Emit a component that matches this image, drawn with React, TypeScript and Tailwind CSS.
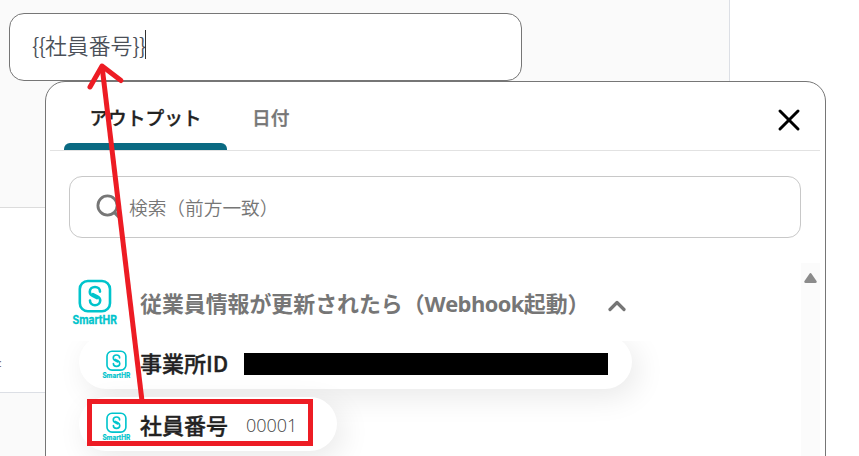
import { X } from 'lucide-react';

type Output = {
  label: string;
  value: string;
  masked?: boolean;
};

const outputs: Output[] = [
  { label: '事業所ID', value: '', masked: true },
  { label: '社員番号', value: '00001' },
];

function SmartHRLogo({ className }: { className: string }) {
  return (
    <svg viewBox="0 0 46 48" className={`overflow-visible ${className}`} fill="none" stroke="#00c4cc" strokeLinecap="round">
      <rect x="7.8" y="2" width="30.2" height="30.2" rx="8" strokeWidth="2.6" />
      <path
        d="M28 12.6C28 9.9 25.9 8 23 8s-5.2 2-5.2 4.7c0 2 1 3.3 2.800 4.200l4.400 2.200M18 21.500C18 24.300 20.100 26.200 23 26.200s5.200-2 5.200-4.700c0-2-1-3.300-2.800-4.200l-4.400-2.200"
        strokeWidth="2.6"
        strokeLinejoin="round"
      />
      <text
        x="22.7"
        y="45.4"
        textAnchor="middle"
        textLength="44.5"
        lengthAdjust="spacingAndGlyphs"
        fill="#00c4cc"
        stroke="#00c4cc"
        strokeWidth="0.3"
        fontFamily="Inter, sans-serif"
        fontWeight="700"
        fontSize="11.5"
      >
        SmartHR
      </text>
    </svg>
  );
}

function OutputPill({ label, value, masked }: Output) {
  return (
    <div className="flex h-[54px] w-fit items-center rounded-full bg-white pl-[23px] pr-[24px] shadow-[6px_8px_30px_rgba(0,0,0,0.09)]">
      <SmartHRLogo className="mt-[6px] h-[30px] w-[29px] shrink-0" />
      <span className="ml-[9px] whitespace-nowrap text-[22px] font-medium leading-none text-[#222] [-webkit-text-stroke:0.35px_#222]">
        {label}
      </span>
      {masked ? (
        <span className="ml-4 mt-[3px] h-[22px] w-[364px] bg-black" />
      ) : (
        <span className="ml-[18px] mr-[16px] mt-[2px] font-['Open_Sans'] text-[18px] font-light leading-none text-[#444]">
          {value}
        </span>
      )}
    </div>
  );
}

function OutputPicker() {
  return (
    <div className="absolute left-[45px] top-[81px] h-[400px] w-[781px] rounded-[20px] border border-[#767676] bg-white pl-1 pr-[5px]">
      {/* タブ */}
      <div className="flex h-[69px] items-stretch border-b border-[#e2e2e2] pl-[14px]">
        <div className="flex w-[163px] flex-col items-center justify-between">
          <span className="pt-[24px] text-[18.7px] font-medium leading-[22px] text-[#222] [-webkit-text-stroke:0.35px_#222]">
            アウトプット
          </span>
          <span className="h-[7px] w-full rounded-t-[6px] bg-[#0a6a82]" />
        </div>
        <span className="ml-[25px] pt-[24px] text-[18.7px] font-medium leading-[22px] text-[#767676] [-webkit-text-stroke:0.35px_#767676]">
          日付
        </span>
        <button type="button" className="ml-auto mr-[13px] mt-[20px] h-9 w-9">
          <X className="h-9 w-9 text-black" strokeWidth={2} />
        </button>
      </div>

      {/* 検索 */}
      <div className="ml-[19px] mt-[25px] flex h-[62px] w-[732px] items-center rounded-[13px] border border-[#c8c8c8] pl-[26px]">
        <svg viewBox="0 0 26 26" className="h-[26px] w-[26px]" fill="none" stroke="#767676">
          <circle cx="11.5" cy="11.5" r="9.6" strokeWidth="2.8" />
          <path d="M18.5 18.5l6 6" strokeWidth="3.2" />
        </svg>
        <span className="ml-[7px] text-[18.7px] font-[350] leading-none text-[#767676]">検索（前方一致）</span>
      </div>

      {/* アウトプット一覧 */}
      <div className="mt-[25px] flex h-[218px]">
        <div className="w-[751px] overflow-hidden">
          <div className="relative z-10 flex h-[78px] items-center bg-white pl-[22px]">
            <SmartHRLogo className="mt-[2px] h-[48px] w-[46px]" />
            <span className="ml-[22px] mt-[4px] whitespace-nowrap font-['Open_Sans','Noto_Sans_CJK_JP',sans-serif] text-[21.9px] font-bold leading-none text-[#767676]">
              従業員情報が更新されたら（
              <span className="tracking-[-0.55px]">Webhook</span>
              起動）
            </span>
            <svg viewBox="0 0 18 12" className="ml-[19px] mt-[7px] h-3 w-[18px]" fill="none" stroke="#767676">
              <path d="M2 9.5l7-7 7 7" strokeWidth="3.2" strokeLinecap="round" strokeLinejoin="round" />
            </svg>
          </div>
          <div className="-mt-[6px] flex flex-col gap-2 pl-[29px]">
            {outputs.map((o) => (
              <OutputPill key={o.label} {...o} />
            ))}
          </div>
        </div>
        <div className="w-[19px] bg-[#fbfbfb] pt-[10px]">
          <svg viewBox="0 0 13 10" className="mx-auto h-[10px] w-[13px]" fill="#8b8b8b">
            <path d="M5.3.9a1.5 1.5 0 0 1 2.4 0l4.8 7c.6 1 .2 2.1-1 2.1h-10C.3 10-.1 8.9.5 7.9z" />
          </svg>
        </div>
      </div>
    </div>
  );
}

// 番号を選んで入力欄へ差し込む流れを示す注釈
function Annotation() {
  return (
    <svg
      className="pointer-events-none absolute left-0 top-0 z-20 h-[456px] w-[859px]"
      viewBox="0 0 859 456"
      fill="none"
      stroke="#ed1c24"
      strokeWidth="5"
    >
      <rect x="89.5" y="401.5" width="221" height="42" />
      <path d="M142 401L102 66" />
      <path d="M90 87l12-21 19 14.5" strokeLinecap="round" strokeLinejoin="round" />
    </svg>
  );
}

export default function App() {
  return (
    <div className="relative h-[456px] w-[859px] overflow-hidden bg-white font-['Noto_Sans_CJK_JP',sans-serif]">
      <div className="flex h-full w-[730px] flex-col border-r border-[#dcdfe5]">
        <div className="h-[208px] border-b border-[#dcdcdc] bg-[#fafafa] pl-[9px] pt-[13px]">
          <div className="flex h-[68px] w-[513px] items-center rounded-[15px] border border-[#767676] bg-white pl-[22px]">
            <span className="mb-[5px] whitespace-nowrap text-[21.9px] font-[350] leading-none text-[#4b5058]">
              <span className="tracking-[-0.8px]">{'{{'}</span>
              社員番号
              <span className="tracking-[-0.8px]">{'}}'}</span>
            </span>
            <span className="mb-[5px] h-[29px] w-px bg-[#333]" />
          </div>
        </div>
        <div className="flex h-[185px] items-end border-b border-[#dcdfe5] bg-white pb-[23px]">
          <span className="-ml-px font-['Liberation_Sans'] text-[10px] leading-none text-[#555]">:</span>
        </div>
        <div className="flex-1 bg-[#fafafa]" />
      </div>

      <OutputPicker />
      <Annotation />
    </div>
  );
}
